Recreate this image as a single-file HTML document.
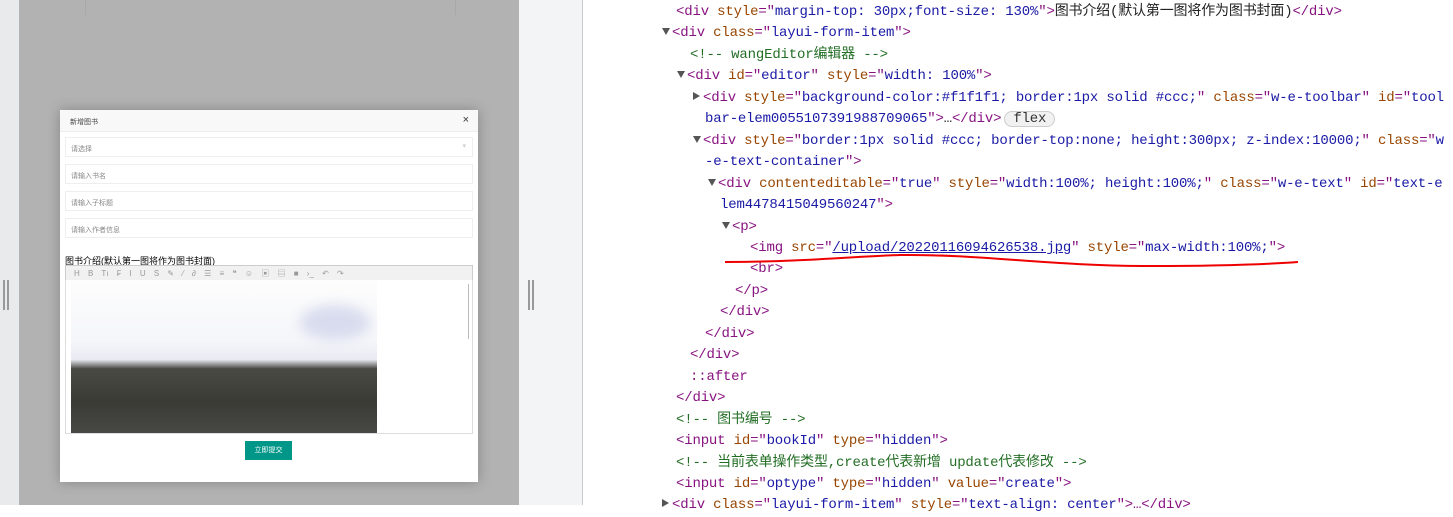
<!DOCTYPE html>
<html><head><meta charset="utf-8"><style>
*{margin:0;padding:0;box-sizing:border-box}
body{width:1453px;height:505px;overflow:hidden;background:#fff;position:relative;font-family:"Liberation Sans","Noto Sans CJK SC",sans-serif}
.a{position:absolute}
.code{position:absolute;left:0;font-family:"Liberation Mono","Noto Sans CJK SC",monospace;font-size:14px;letter-spacing:-0.17px;white-space:pre;color:#881280;line-height:21.45px}
.n{color:#994500}.v{color:#1a1aa6}.c{color:#236e25}.t{color:#222}
.tri{display:inline-block;width:0;height:0;border-left:4px solid transparent;border-right:4px solid transparent;border-top:7px solid #555;margin-right:2px;vertical-align:1px}
.trr{display:inline-block;width:0;height:0;border-top:4px solid transparent;border-bottom:4px solid transparent;border-left:7px solid #555;margin-right:3px;vertical-align:1px}
.inp{position:absolute;left:65px;width:408px;height:20px;border:1px solid #eee;background:#fff;font-size:7px;color:#888;padding:6px 0 0 5px}
</style></head><body>
<div class="a" style="left:0;top:0;width:19px;height:505px;background:#e9eaec"></div>
<div class="a" style="left:3px;top:280px;width:2px;height:30px;background:#999"></div>
<div class="a" style="left:7px;top:280px;width:2px;height:30px;background:#999"></div>
<div class="a" style="left:19px;top:0;width:500px;height:505px;background:#b2b2b2"></div>
<div class="a" style="left:85px;top:0;width:1px;height:15px;background:#a8a8a8"></div>
<div class="a" style="left:455px;top:0;width:1px;height:15px;background:#a8a8a8"></div>
<div class="a" style="left:519px;top:0;width:63px;height:505px;background:#f3f4f5"></div>
<div class="a" style="left:528px;top:280px;width:2px;height:30px;background:#999"></div>
<div class="a" style="left:532px;top:280px;width:2px;height:30px;background:#999"></div>
<div class="a" style="left:582px;top:0;width:1px;height:505px;background:#ccc"></div>

<div class="a" style="left:60px;top:110px;width:418px;height:372px;background:#fff;box-shadow:0 0 12px rgba(0,0,0,.25)">
  <div class="a" style="left:0;top:0;width:418px;height:22px;background:#f8f8f8;border-bottom:1px solid #eee;font-size:7px;color:#444;padding:7px 0 0 10px">新增图书</div>
  <div class="a" style="right:9px;top:4px;font-size:11px;color:#333">×</div>
</div>
<div class="inp" style="top:137px">请选择<span style="position:absolute;right:6px;top:4px;color:#ccc">▾</span></div>
<div class="inp" style="top:164px">请输入书名</div>
<div class="inp" style="top:191px">请输入子标题</div>
<div class="inp" style="top:218px">请输入作者信息</div>
<div class="a" style="left:65px;top:254px;font-size:9px;color:#000">图书介绍(默认第一图将作为图书封面)</div>
<div class="a" style="left:65px;top:265px;width:408px;height:16px;background:#f1f1f1;border:1px solid #ccc;font-size:8px;color:#999;padding:2px 0 0 8px;word-spacing:6px;letter-spacing:0">H B Tı ₣ I U S ✎ ⁄ ∂ ☰ ≡ ❝ ☺ ▣ ▤ ■ ›_ ↶ ↷</div>
<div class="a" style="left:65px;top:280px;width:408px;height:154px;border:1px solid #ddd;border-top:none;background:#fff"></div>
<div class="a" style="left:468px;top:284px;width:1px;height:55px;background:#bbb"></div>
<div class="a" style="left:71px;top:280px;width:306px;height:153px;background:linear-gradient(180deg,#fdfdfd 0%,#f5f6fa 40%,#e9ebf3 52%,#4a4a44 58%,#3b3b36 80%,#484844 100%)"></div>
<div class="a" style="left:300px;top:305px;width:70px;height:35px;background:#d8dcee;border-radius:50%;filter:blur(6px)"></div>
<div class="a" style="left:245px;top:441px;width:47px;height:19px;background:#009688;color:#fff;font-size:7px;text-align:center;line-height:19px">立即提交</div>

<div class="code" style="top:2px"><span style="padding-left:676px"></span>&lt;div <span class="n">style</span>="<span class="v">margin-top: 30px;font-size: 130%</span>"&gt;<span class="t">图书介绍(默认第一图将作为图书封面)</span>&lt;/div&gt;
<span style="padding-left:662px"></span><span class="tri"></span>&lt;div <span class="n">class</span>="<span class="v">layui-form-item</span>"&gt;
<span style="padding-left:690px"></span><span class="c">&lt;!-- wangEditor编辑器 --&gt;</span>
<span style="padding-left:677px"></span><span class="tri"></span>&lt;div <span class="n">id</span>="<span class="v">editor</span>" <span class="n">style</span>="<span class="v">width: 100%</span>"&gt;
<span style="padding-left:693px"></span><span class="trr"></span>&lt;div <span class="n">style</span>="<span class="v">background-color:#f1f1f1; border:1px solid #ccc;</span>" <span class="n">class</span>="<span class="v">w-e-toolbar</span>" <span class="n">id</span>="<span class="v">tool</span>
<span style="padding-left:705px"></span><span class="v">bar-elem0055107391988709065</span>"&gt;<span class="t">…</span>&lt;/div&gt;<span style="display:inline-block;border:1px solid #ccc;border-radius:8px;background:#f1f1f1;color:#333;line-height:14px;padding:0 8px;margin-left:3px">flex</span>
<span style="padding-left:693px"></span><span class="tri"></span>&lt;div <span class="n">style</span>="<span class="v">border:1px solid #ccc; border-top:none; height:300px; z-index:10000;</span>" <span class="n">class</span>="<span class="v">w</span>
<span style="padding-left:705px"></span><span class="v">-e-text-container</span>"&gt;
<span style="padding-left:708px"></span><span class="tri"></span>&lt;div <span class="n">contenteditable</span>="<span class="v">true</span>" <span class="n">style</span>="<span class="v">width:100%; height:100%;</span>" <span class="n">class</span>="<span class="v">w-e-text</span>" <span class="n">id</span>="<span class="v">text-e</span>
<span style="padding-left:720px"></span><span class="v">lem4478415049560247</span>"&gt;
<span style="padding-left:722px"></span><span class="tri"></span>&lt;p&gt;
<span style="padding-left:750px"></span>&lt;img <span class="n">src</span>="<span class="v" style="text-decoration:underline">/upload/20220116094626538.jpg</span>" <span class="n">style</span>="<span class="v">max-width:100%;</span>"&gt;
<span style="padding-left:750px"></span>&lt;br&gt;
<span style="padding-left:735px"></span>&lt;/p&gt;
<span style="padding-left:720px"></span>&lt;/div&gt;
<span style="padding-left:705px"></span>&lt;/div&gt;
<span style="padding-left:690px"></span>&lt;/div&gt;
<span style="padding-left:690px"></span><span style="color:#881280">::after</span>
<span style="padding-left:676px"></span>&lt;/div&gt;
<span style="padding-left:676px"></span><span class="c">&lt;!-- 图书编号 --&gt;</span>
<span style="padding-left:676px"></span>&lt;input <span class="n">id</span>="<span class="v">bookId</span>" <span class="n">type</span>="<span class="v">hidden</span>"&gt;
<span style="padding-left:676px"></span><span class="c">&lt;!-- 当前表单操作类型,create代表新增 update代表修改 --&gt;</span>
<span style="padding-left:676px"></span>&lt;input <span class="n">id</span>="<span class="v">optype</span>" <span class="n">type</span>="<span class="v">hidden</span>" <span class="n">value</span>="<span class="v">create</span>"&gt;
<span style="padding-left:662px"></span><span class="trr"></span>&lt;div <span class="n">class</span>="<span class="v">layui-form-item</span>" <span class="n">style</span>="<span class="v">text-align: center</span>"&gt;…&lt;/div&gt;</div>
<svg class="a" style="left:0;top:0" width="1453" height="505"><path d="M725 262 C800 262 860 256 900 255 C980 254 1050 266 1150 266 C1220 266 1270 264 1298 262" stroke="#e00" stroke-width="2" fill="none"/></svg>
</body></html>
